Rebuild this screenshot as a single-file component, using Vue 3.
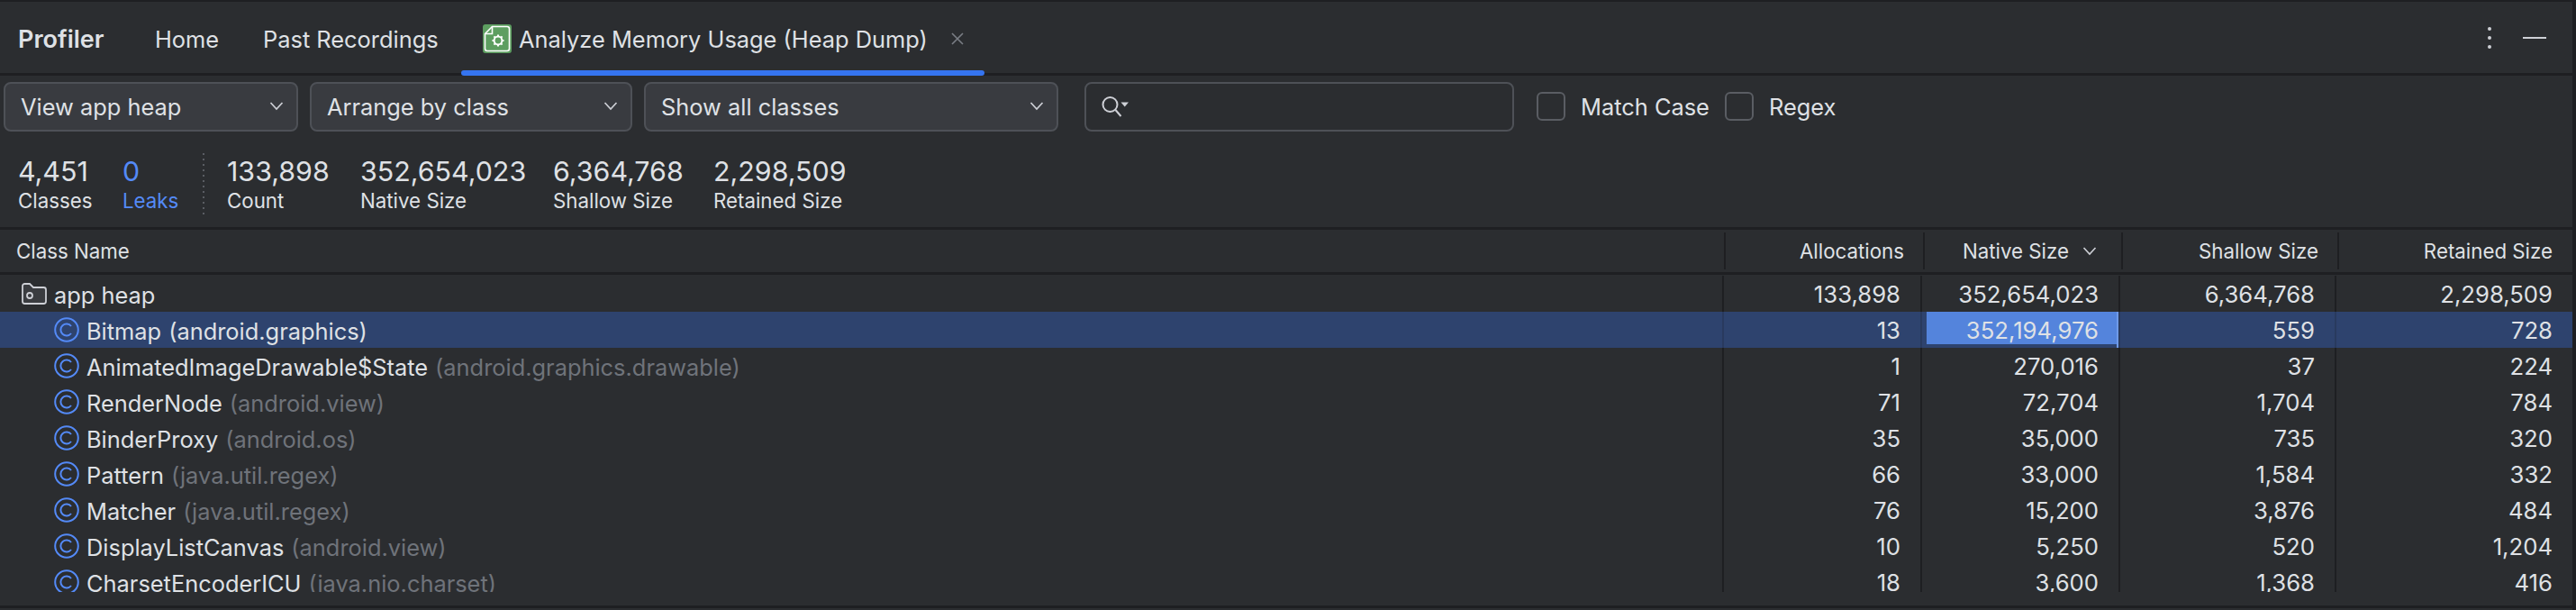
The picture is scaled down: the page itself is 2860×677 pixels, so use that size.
<script setup>
const stats = [
  { value: '4,451', label: 'Classes', cls: 's1' },
  { value: '0', label: 'Leaks', cls: 's2 blue' },
]
const stats2 = [
  { value: '133,898', label: 'Count', w: 148 },
  { value: '352,654,023', label: 'Native Size', w: 214 },
  { value: '6,364,768', label: 'Shallow Size', w: 178 },
  { value: '2,298,509', label: 'Retained Size', w: 180 },
]
const rows = [
  { name: 'Bitmap', pkg: '(android.graphics)', a: '13', n: '352,194,976', s: '559', r: '728', sel: true },
  { name: 'AnimatedImageDrawable$State', pkg: '(android.graphics.drawable)', a: '1', n: '270,016', s: '37', r: '224' },
  { name: 'RenderNode', pkg: '(android.view)', a: '71', n: '72,704', s: '1,704', r: '784' },
  { name: 'BinderProxy', pkg: '(android.os)', a: '35', n: '35,000', s: '735', r: '320' },
  { name: 'Pattern', pkg: '(java.util.regex)', a: '66', n: '33,000', s: '1,584', r: '332' },
  { name: 'Matcher', pkg: '(java.util.regex)', a: '76', n: '15,200', s: '3,876', r: '484' },
  { name: 'DisplayListCanvas', pkg: '(android.view)', a: '10', n: '5,250', s: '520', r: '1,204' },
  { name: 'CharsetEncoderICU', pkg: '(java.nio.charset)', a: '18', n: '3,600', s: '1,368', r: '416' },
]
const selects = [
  { label: 'View app heap', w: 327 },
  { label: 'Arrange by class', w: 358 },
  { label: 'Show all classes', w: 460 },
]
</script>

<template>
  <div class="app">
    <header class="tabs">
      <span class="tab brand">Profiler</span>
      <span class="tab home">Home</span>
      <span class="tab past">Past Recordings</span>
      <span class="tab active">
        <svg class="file" width="32" height="32" viewBox="0 0 32 32">
          <rect width="32" height="32" rx="3" fill="#5d9e60" />
          <path d="M10.500 2.500H27a2.500 2.500 0 0 1 2.500 2.500V27a2.500 2.500 0 0 1-2.500 2.500H5A2.500 2.500 0 0 1 2.500 27V10.500Z" fill="none" stroke="#fff" stroke-width="1.600" />
          <path d="M10.500 2.500V10.500H2.500" fill="none" stroke="#fff" stroke-width="1.600" />
          <circle cx="17" cy="18" r="4.400" fill="none" stroke="#fff" stroke-width="2" />
          <path d="M17 11.500v2.400M17 22.100v2.400M10.500 18h2.400M21.100 18h2.400M12.400 13.400l1.700 1.700M19.900 20.900l1.700 1.700M21.600 13.400l-1.700 1.700M14.100 20.900l-1.700 1.700" stroke="#fff" stroke-width="2" />
        </svg>
        <span>Analyze Memory Usage (Heap Dump)</span>
        <svg class="close" width="16" height="16" viewBox="0 0 16 16">
          <path d="M2 2l12 12M14 2L2 14" stroke="#7a7e85" stroke-width="1.600" fill="none" />
        </svg>
      </span>
      <span class="spacer"></span>
      <span class="dots"><i></i><i></i><i></i></span>
      <span class="minus"></span>
    </header>

    <section class="toolbar">
      <div v-for="s in selects" :key="s.label" class="select" :style="{ width: s.w + 'px' }">
        <span>{{ s.label }}</span>
        <svg width="16" height="10" viewBox="0 0 16 10">
          <path d="M1.500 1l6.500 7 6.500-7" fill="none" stroke="#ced0d6" stroke-width="1.700" />
        </svg>
      </div>
      <div class="search">
        <svg width="32" height="26" viewBox="0 0 32 26">
          <circle cx="9.500" cy="10" r="8" fill="none" stroke="#ced0d6" stroke-width="2" />
          <path d="M15.500 16l6 7" stroke="#ced0d6" stroke-width="2" fill="none" />
          <path d="M21.500 7.500h8.500l-4.250 5z" fill="#ced0d6" />
        </svg>
      </div>
      <label class="check c1"><i></i><span>Match Case</span></label>
      <label class="check c2"><i></i><span>Regex</span></label>
    </section>

    <section class="stats">
      <div v-for="s in stats" :key="s.label" class="stat" :class="s.cls">
        <b>{{ s.value }}</b><small>{{ s.label }}</small>
      </div>
      <div class="vsep"></div>
      <div v-for="s in stats2" :key="s.label" class="stat" :style="{ width: s.w + 'px' }">
        <b>{{ s.value }}</b><small>{{ s.label }}</small>
      </div>
    </section>

    <section class="table">
      <div class="head">
        <div class="hc name">Class Name</div>
        <div class="hc alloc">Allocations</div>
        <div class="hc native">Native Size
          <svg width="16" height="10" viewBox="0 0 16 10">
            <path d="M1.500 1l6.500 7 6.500-7" fill="none" stroke="#ced0d6" stroke-width="1.600" />
          </svg>
        </div>
        <div class="hc shallow">Shallow Size</div>
        <div class="hc retained">Retained Size</div>
      </div>
      <div class="body">
        <div class="row">
          <div class="cell name root">
            <svg class="folder" width="28" height="24" viewBox="0 0 28 24">
              <path d="M1 3.500A2.500 2.500 0 0 1 3.500 1H9l4 4h11.500A2.500 2.500 0 0 1 27 7.500V20.500A2.500 2.500 0 0 1 24.500 23H3.500A2.500 2.500 0 0 1 1 20.500Z" fill="#3a3c40" stroke="#ced0d6" stroke-width="1.800" />
              <circle cx="9" cy="14" r="3" fill="none" stroke="#ced0d6" stroke-width="1.800" />
            </svg>
            <span>app heap</span>
          </div>
          <div class="cell alloc">133,898</div>
          <div class="cell native">352,654,023</div>
          <div class="cell shallow">6,364,768</div>
          <div class="cell retained">2,298,509</div>
        </div>
        <div v-for="r in rows" :key="r.name" class="row" :class="{ selected: r.sel }">
          <div class="cell name">
            <svg class="cicon" width="28" height="28" viewBox="0 0 28 28">
              <circle cx="14" cy="14" r="12.800" fill="none" stroke="#548af7" stroke-width="2" />
              <path d="M19 10a6.500 6.500 0 1 0 0 8" fill="none" stroke="#548af7" stroke-width="2" />
            </svg>
            <span class="cname">{{ r.name }}</span>
            <span class="pkg">{{ r.pkg }}</span>
          </div>
          <div class="cell alloc">{{ r.a }}</div>
          <div class="cell native">
            <span v-if="r.sel" class="bar"></span>
            <span class="val">{{ r.n }}</span>
          </div>
          <div class="cell shallow">{{ r.s }}</div>
          <div class="cell retained">{{ r.r }}</div>
        </div>
      </div>
    </section>
  </div>
</template>

<style>
html, body { margin: 0; background: #2b2d30; }
</style>

<style scoped>
.app {
  width: 2860px;
  height: 677px;
  box-sizing: border-box;
  border-top: 2px solid #1e1f22;
  border-right: 4px solid #1e1f22;
  background: #2b2d30;
  color: #dfe1e5;
  font-family: Inter, "Liberation Sans", sans-serif;
  display: flex;
  flex-direction: column;
  overflow: hidden;
}
.tabs {
  height: 82px;
  box-sizing: border-box;
  border-bottom: 3px solid #1e1f22;
  display: flex;
  align-items: center;
  font-size: 25.400px;
  flex: none;
  padding-left: 20px;
  padding-top: 3px;
}
.tab { white-space: nowrap; }
.brand { font-weight: 600; font-size: 27px; width: 152px; }
.home { width: 120px; }
.past { width: 244px; }
.active {
  display: flex;
  align-items: center;
  align-self: stretch;
  gap: 8px;
  position: relative;
}
.active::after {
  content: "";
  position: absolute;
  left: -24px;
  right: -22px;
  bottom: -3px;
  height: 6px;
  border-radius: 3px;
  background: #3574f0;
}
.close { margin-left: 17px; }
.spacer { flex: 1; }
.dots {
  display: flex;
  flex-direction: column;
  gap: 6px;
  margin: 0 35px 2px 0;
}
.dots i {
  width: 4px;
  height: 4px;
  border-radius: 50%;
  background: #ced0d6;
}
.minus {
  width: 26px;
  height: 2px;
  background: #ced0d6;
  margin: 0 29px 2px 0;
}
.toolbar {
  height: 62px;
  flex: none;
  box-sizing: border-box;
  display: flex;
  align-items: center;
  padding: 6px 0 0 4px;
  gap: 13px;
  font-size: 25.400px;
}
.select {
  height: 55px;
  box-sizing: border-box;
  background: #393b40;
  border: 2px solid #4e5157;
  border-radius: 8px;
  display: flex;
  align-items: center;
  justify-content: space-between;
  padding: 0 14px 0 17px;
}
.search {
  width: 477px;
  height: 55px;
  box-sizing: border-box;
  border: 2px solid #4e5157;
  border-radius: 8px;
  margin-left: 16px;
  display: flex;
  align-items: center;
  padding: 2px 0 0 17px;
}
.check {
  display: flex;
  align-items: center;
  gap: 17px;
}
.c1 { margin-left: 12px; }
.c2 { margin-left: 4px; }
.check i {
  width: 32px;
  height: 32px;
  box-sizing: border-box;
  border: 2px solid #5a5d63;
  border-radius: 6px;
}
.stats {
  flex: none;
  height: 106px;
  box-sizing: border-box;
  display: flex;
  padding: 26px 0 0 20px;
}
.stat {
  display: flex;
  flex-direction: column;
  flex: none;
}
.stat b {
  font-weight: 400;
  font-size: 30.400px;
  line-height: 36px;
}
.stat small {
  font-size: 22.300px;
  line-height: 28px;
  margin-top: 1px;
}
.s1 { width: 116px; }
.s2 { width: 89px; }
.blue { color: #548af7; }
.vsep {
  width: 2px;
  height: 68px;
  background: repeating-linear-gradient(to bottom, #5a5d63 0 2px, transparent 2px 6px);
  margin: -2px 25px 0 0;
  flex: none;
}
.table {
  border-top: 3px solid #1e1f22;
  border-bottom: 3px solid #1e1f22;
  margin-bottom: 2px;
  flex: 1;
  min-height: 0;
  display: flex;
  flex-direction: column;
}
.head {
  flex: none;
  height: 50px;
  box-sizing: border-box;
  border-bottom: 3px solid #1e1f22;
  display: grid;
  grid-template-columns: 1914px 221px 220px 240px 260px;
  font-size: 22.300px;
  color: #dfe1e5;
}
.hc {
  display: flex;
  align-items: center;
  justify-content: flex-end;
  padding-right: 21px;
  border-left: 2px solid #1e1f22;
  margin: 3px 0;
  box-sizing: border-box;
}
.hc.name {
  justify-content: flex-start;
  border-left: 0;
  padding-left: 18px;
}
.hc.native { gap: 15px; padding-right: 27px; }
.body {
  height: 351px;
  margin-top: 1px;
  overflow: hidden;
  flex: none;
}
.row {
  height: 40px;
  display: grid;
  grid-template-columns: 1912px 220px 220px 240px 264px;
  font-size: 25.700px;
  align-items: stretch;
}
.row.selected { background: #2e436e; }
.cell {
  display: flex;
  align-items: center;
  justify-content: flex-end;
  padding-right: 22px;
  padding-top: 1px;
  box-sizing: border-box;
  border-left: 2px solid #1e1f22;
  position: relative;
}
.selected .cell { border-left-color: #293a5e; }
.cell.name {
  justify-content: flex-start;
  border-left: 0;
  padding-left: 60px;
  padding-top: 0;
  font-size: 25.400px;
  white-space: nowrap;
}
.cell.name span { position: relative; top: 1px; }
.cell.root { padding-left: 24px; }
.folder { margin-right: 8px; }
.cicon { margin-right: 8px; }
.pkg { margin-left: 8px; color: #6f737a; }
.selected .pkg { color: #dfe1e5; }
.bar {
  position: absolute;
  left: 5px;
  right: 0;
  top: 0;
  bottom: 4px;
  background: #5484dc;
}
.bar::after {
  content: "";
  position: absolute;
  right: 0;
  top: 0;
  bottom: -4px;
  width: 2px;
  background: #6f9ae8;
}
.val { position: relative; }
</style>
